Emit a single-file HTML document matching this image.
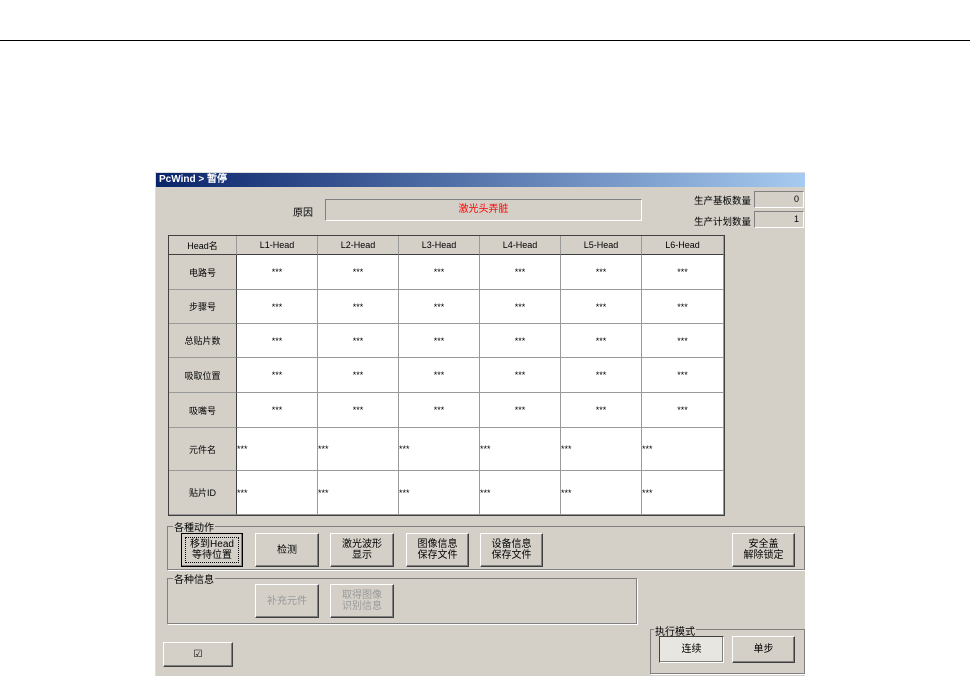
<!DOCTYPE html>
<html><head><meta charset="utf-8"><style>
body{margin:0;width:970px;height:676px;background:#fff;position:relative;overflow:hidden;font-family:"Liberation Sans","WenQuanYi Zen Hei",sans-serif;font-size:10px;color:#000}
.a{position:absolute}
.win{left:155px;top:172px;width:650px;height:504px;background:#d4d0c8;border-top:1px solid #ddd;border-left:1px solid #ddd;box-sizing:border-box}
.title{left:156px;top:173px;width:649px;height:14px;background:linear-gradient(90deg,#0a246a,#a6caf0);color:#fff;font-weight:bold;font-size:10px;line-height:14px;padding-left:3px;box-sizing:border-box}
.sunk{background:#d4d0c8;border:1px solid;border-color:#808080 #fff #fff #808080;box-sizing:border-box}
.btn{position:absolute;background:#d4d0c8;border:1px solid;border-color:#fff #404040 #404040 #fff;box-shadow:inset -1px -1px 0 #808080;box-sizing:border-box;display:flex;align-items:center;justify-content:center;text-align:center;font-size:10px;line-height:11px}
.grp{position:absolute;border:1px solid #808080;box-shadow:1px 1px 0 #fff;box-sizing:border-box}
.gl{position:absolute;background:#d4d0c8;font-size:10px;padding:0 1px}
.c{position:absolute;box-sizing:border-box;border-right:1px solid #999;border-bottom:1px solid #999;display:flex;align-items:center;justify-content:center;font-size:9px}
.h{background:#d4d0c8}
.w{background:#fff}
.l{justify-content:flex-start}
</style></head><body>
<div class="a" style="left:0;top:40px;width:970px;height:1px;background:#000"></div>
<div class="a win"></div>
<div class="a title">PcWind &gt; 暂停</div>
<div class="a" style="left:293px;top:204px;font-size:10px">原因</div>
<div class="a sunk" style="left:325px;top:199px;width:317px;height:22px;color:#f00;text-align:center;line-height:20px">激光头弄脏</div>
<div class="a" style="left:694px;top:193px;font-size:9.5px">生产基板数量</div>
<div class="a sunk" style="left:754px;top:191px;width:50px;height:17px;text-align:right;padding-right:4px;line-height:15px;font-size:9px">0</div>
<div class="a" style="left:694px;top:214px;font-size:9.5px">生产计划数量</div>
<div class="a sunk" style="left:754px;top:211px;width:50px;height:17px;text-align:right;padding-right:4px;line-height:15px;font-size:9px">1</div>
<div class="a" style="left:168px;top:235px;width:557px;height:281px;border:1px solid #404040;border-right:2px solid #404040;box-sizing:border-box;background:#fff"></div>
<div id="t"></div>
<script>
var xs=[169,237,318,399,480,561,642,724],ys=[236,255,290,324,358,393,428,471,515];
var rn=["Head名","电路号","步骤号","总贴片数","吸取位置","吸嘴号","元件名","贴片ID"];
var h="";
for(var r=0;r<8;r++)for(var c=0;c<7;c++){
var cls="c",txt="";
if(r==0||c==0){cls+=" h";txt=r==0&&c>0?"L"+c+"-Head":rn[r];}
else{cls+=" w";txt="***";if(r>=6)cls+=" l";}
h+='<div class="'+cls+'" style="left:'+xs[c]+'px;top:'+ys[r]+'px;width:'+(xs[c+1]-xs[c])+'px;height:'+(ys[r+1]-ys[r])+'px'+(c==0&&r>0?';border-right:1px solid #404040':'')+(r==0?';border-bottom:1px solid #404040':'')+'">'+txt+'</div>';}
document.getElementById("t").innerHTML=h;
</script>
<div class="grp" style="left:167px;top:526px;width:638px;height:44px"></div>
<div class="gl" style="left:173px;top:519px">各種动作</div>
<div class="btn" style="left:181px;top:533px;width:62px;height:34px;border:1px solid #000;outline:1px dotted #000;outline-offset:-5px">移到Head<br>等待位置</div>
<div class="btn" style="left:255px;top:533px;width:64px;height:34px">检测</div>
<div class="btn" style="left:330px;top:533px;width:64px;height:34px">激光波形<br>显示</div>
<div class="btn" style="left:406px;top:533px;width:63px;height:34px">图像信息<br>保存文件</div>
<div class="btn" style="left:480px;top:533px;width:63px;height:34px">设备信息<br>保存文件</div>
<div class="btn" style="left:732px;top:533px;width:63px;height:34px">安全盖<br>解除锁定</div>
<div class="grp" style="left:167px;top:578px;width:470px;height:46px"></div>
<div class="gl" style="left:173px;top:571px">各种信息</div>
<div class="btn" style="left:255px;top:584px;width:64px;height:34px;color:#999">补充元件</div>
<div class="btn" style="left:330px;top:584px;width:64px;height:34px;color:#999">取得图像<br>识别信息</div>
<div class="btn" style="left:163px;top:642px;width:70px;height:25px">☑</div>
<div class="grp" style="left:650px;top:629px;width:155px;height:45px"></div>
<div class="gl" style="left:654px;top:623px">执行模式</div>
<div class="btn" style="left:659px;top:636px;width:65px;height:27px;border-color:#404040 #fff #fff #404040;background:#e8e6e0">连续</div>
<div class="btn" style="left:732px;top:636px;width:63px;height:27px">单步</div>
</body></html>
